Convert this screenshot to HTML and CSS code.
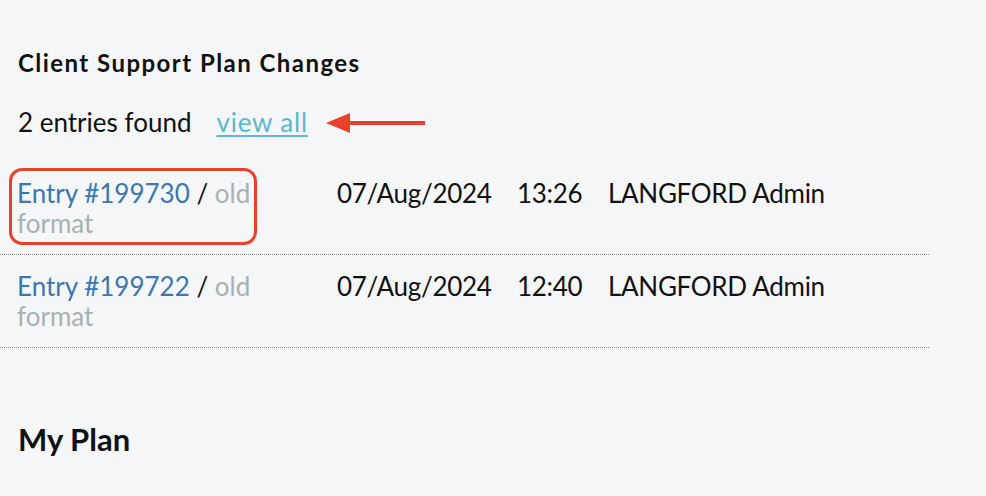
FILE: index.html
```html
<!DOCTYPE html>
<html lang="en">
<head>
<meta charset="utf-8">
<title>Client Support Plan Changes</title>
<link rel="stylesheet" href="styles.css">
</head>
<body>
<main class="page">
  <section class="changes">
    <h2 class="section-title">Client Support Plan Changes</h2>
    <div class="summary">
      <span class="count">2 entries found</span>
      <a class="view-all" href="#">view all</a>
      <svg class="arrow" width="100" height="22" viewBox="0 0 100 22" aria-hidden="true">
        <path d="M0 11 L24 1 L24 9 L99 9 L99 13 L24 13 L24 21 Z" fill="#e8432a"/>
      </svg>
    </div>
    <div class="entries">
      <div class="entry">
        <div class="entry-ref highlighted"><a class="entry-link" href="#">Entry #199730</a> <span class="sep">/</span> <span class="format">old format</span></div>
        <div class="entry-date">07/Aug/2024</div>
        <div class="entry-time">13:26</div>
        <div class="entry-user">LANGFORD Admin</div>
      </div>
      <div class="entry">
        <div class="entry-ref"><a class="entry-link" href="#">Entry #199722</a> <span class="sep">/</span> <span class="format">old format</span></div>
        <div class="entry-date">07/Aug/2024</div>
        <div class="entry-time">12:40</div>
        <div class="entry-user">LANGFORD Admin</div>
      </div>
    </div>
  </section>
  <h2 class="plan-title">My Plan</h2>
</main>
</body>
</html>
```
FILE: styles.css
```css
html, body {
  margin: 0;
  padding: 0;
  background: #f5f6f8;
}
body {
  font-family: "Lato", "Open Sans", sans-serif;
  font-size: 26px;
  line-height: 30px;
  color: #111;
}
.page {
  padding-top: 48px;
}
.section-title {
  margin: 0 0 0 18px;
  font-size: 24px;
  letter-spacing: 1.45px;
  line-height: 30px;
  font-weight: 700;
}
.summary {
  display: flex;
  align-items: center;
  margin: 29px 0 0 18px;
  height: 30px;
}
.view-all {
  margin-left: 25px;
  color: #5ab9cf;
  text-decoration: underline;
  text-underline-offset: 3px;
  letter-spacing: 0.8px;
}
.arrow {
  margin-left: 18px;
  margin-top: 2px;
}
.entries {
  width: 929px;
  margin-top: 25px;
}
.entry {
  display: grid;
  grid-template-columns: 320px 180px 91px 1fr;
  padding: 16px 0 16px 17px;
  border-bottom: 1px dotted #8c8c8c;
}
.entry-date,
.entry-time,
.entry-user {
  letter-spacing: -0.3px;
}
.entry-ref {
  position: relative;
  width: 240px;
}
.entry-link {
  color: #3a78b0;
  text-decoration: none;
}
.sep {
  color: #111;
}
.format {
  color: #a8b1b1;
}
.highlighted::after {
  content: "";
  position: absolute;
  left: -8px;
  top: -10px;
  width: 248px;
  height: 77px;
  box-sizing: border-box;
  border: 3px solid #e8432a;
  border-radius: 13px;
}
.plan-title {
  margin: 73px 0 0 18px;
  font-size: 31px;
  line-height: 36px;
  font-weight: 700;
}
```
